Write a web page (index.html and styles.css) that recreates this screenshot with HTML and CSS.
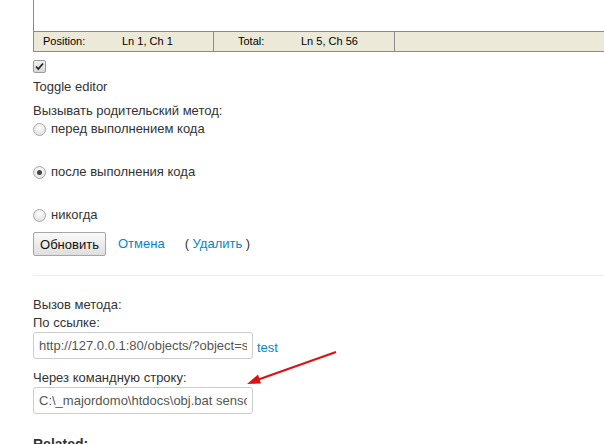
FILE: index.html
```html
<!DOCTYPE html>
<html>
<head>
<meta charset="utf-8">
<link rel="stylesheet" href="styles.css">
</head>
<body>
<div class="page">
  <div class="editor">
    <div class="editor-area"></div>
    <div class="statusbar">
      <div class="cell"><span class="lbl">Position:</span><span class="val1">Ln 1, Ch 1</span></div>
      <div class="cell"><span class="lbl2">Total:</span><span class="val2">Ln 5, Ch 56</span></div>
      <div class="cell last"></div>
    </div>
  </div>

  <div class="check-row"><span class="checkbox"><svg width="11" height="11" viewBox="0 0 11 11"><path d="M2 5.5 L4.3 8 L9 2.5" fill="none" stroke="#222" stroke-width="1.8"/></svg></span></div>
  <div class="line toggle">Toggle editor</div>
  <div class="line caption">Вызывать родительский метод:</div>
  <div class="radio-row first"><span class="radio"></span><span>перед выполнением кода</span></div>
  <div class="radio-row"><span class="radio checked"></span><span>после выполнения кода</span></div>
  <div class="radio-row"><span class="radio"></span><span>никогда</span></div>

  <div class="actions">
    <button class="btn" type="button">Обновить</button>
    <a class="link cancel" href="#">Отмена</a>
    <span class="paren">( <a class="link" href="#">Удалить</a> )</span>
  </div>

  <hr class="sep">

  <div class="line call-title">Вызов метода:</div>
  <div class="line">По ссылке:</div>
  <div class="field-row">
    <input class="field" type="text" value="http://127.0.0.1:80/objects/?object=sensor&amp;op=m&amp;m=statusChanged">
    <a class="link test" href="#">test</a>
  </div>
  <div class="line cmd-title">Через командную строку:</div>
  <div class="field-row">
    <input class="field" type="text" value="C:\_majordomo\htdocs\obj.bat sensor.statusChanged">
  </div>
  <div class="related">Related:</div>
</div>
<svg class="arrow" width="604" height="444" viewBox="0 0 604 444">
  <line x1="336" y1="352" x2="257" y2="380" stroke="#e01010" stroke-width="2"/>
  <polygon points="247,384 258,374.5 261,383.5" fill="#e01010"/>
</svg>
</body>
</html>
```

FILE: styles.css
```css
html, body {
  margin: 0;
  padding: 0;
  background: #fff;
}
body {
  font-family: "Liberation Sans", Arial, sans-serif;
  font-size: 13px;
  line-height: 18px;
  color: #333;
  overflow: hidden;
  height: 444px;
}
.page {
  padding-left: 33px;
}
.editor {
  border-left: 1px solid #8a8a8a;
}
.editor-area {
  height: 31px;
  background: #fff;
}
.statusbar {
  display: grid;
  grid-template-columns: 180px 181px 1fr;
  height: 19px;
  background: #ece9d8;
  border-top: 1px solid #8a8a8a;
  border-bottom: 1px solid #8a8a8a;
  font-size: 11px;
  line-height: 19px;
  color: #000;
}
.cell {
  border-right: 1px solid #8a8a8a;
  display: flex;
  white-space: nowrap;
}
.cell.last {
  border-right: none;
}
.lbl { margin-left: 9px; width: 79px; }
.lbl2 { margin-left: 24px; width: 63px; }
.check-row {
  height: 13px;
  margin-top: 8px;
  display: flex;
}
.checkbox {
  width: 11px;
  height: 11px;
  border: 1px solid #9a9a9a;
  border-radius: 2px;
  background: linear-gradient(#f2f2f2, #d6d6d6);
  display: flex;
}
.line {
  height: 18px;
  white-space: nowrap;
}
.toggle { margin-top: 5px; }
.caption { margin-top: 6px; }
.radio-row {
  display: flex;
  align-items: center;
  height: 18px;
  margin-top: 25px;
  white-space: nowrap;
}
.radio-row.first { margin-top: 0; }
.radio {
  width: 11px;
  height: 11px;
  border: 1px solid #a8a8a8;
  border-radius: 50%;
  background: radial-gradient(circle at 50% 35%, #fdfdfd, #dcdcdc);
  margin-right: 5px;
  position: relative;
  flex: none;
}
.radio.checked::after {
  content: "";
  position: absolute;
  left: 3px;
  top: 3px;
  width: 5px;
  height: 5px;
  border-radius: 50%;
  background: #444;
}
.actions {
  display: flex;
  align-items: center;
  margin-top: 8px;
  height: 24px;
}
.btn {
  box-sizing: border-box;
  width: 73px;
  height: 24px;
  padding: 0;
  border: 1px solid #a6a6a6;
  border-radius: 2px;
  background: linear-gradient(#fafafa, #dedede);
  font-family: "Liberation Sans", Arial, sans-serif;
  font-size: 13px;
  color: #111;
}
.link {
  color: #0088cc;
  text-decoration: none;
}
.cancel { margin-left: 12px; }
.paren { margin-left: 20px; }
.sep {
  margin: 19px 0 0 0;
  height: 0;
  border: 0;
  border-top: 1px solid #eeeeee;
}
.call-title { margin-top: 20px; }
.field-row {
  display: flex;
  height: 27px;
}
.field {
  box-sizing: border-box;
  width: 220px;
  height: 27px;
  margin: 0;
  padding: 4px 5px;
  border: 1px solid #cccccc;
  border-radius: 3px;
  font-family: "Liberation Sans", Arial, sans-serif;
  font-size: 13px;
  color: #555;
  background: #fff;
  outline: none;
}
.test {
  align-self: flex-end;
  margin-left: 4px;
  margin-bottom: 2px;
  line-height: 18px;
}
.cmd-title { margin-top: 10px; }
.related {
  margin-top: 20px;
  font-weight: bold;
  font-size: 14px;
  line-height: 20px;
}
.arrow {
  position: absolute;
  left: 0;
  top: 0;
  pointer-events: none;
}
```
